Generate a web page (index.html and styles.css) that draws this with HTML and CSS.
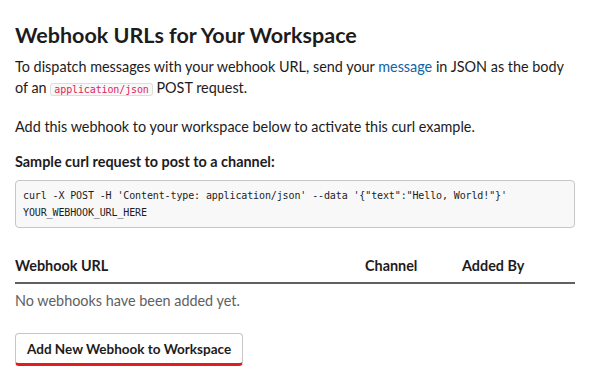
FILE: index.html
```html
<!DOCTYPE html>
<html>
<head>
    <title>Incoming Webhooks</title>
    <link rel="stylesheet" href="styles.css">
</head>
<body>
    <div class="page">
        <h1 class="title">Webhook URLs for Your Workspace</h1>
        <p class="intro">
            To dispatch messages with your webhook URL, send your <a href="#" class="link">message</a> in JSON as the body
            of an <code class="inline-code">application/json</code> POST request.
        </p>
        <p class="intro intro-note">Add this webhook to your workspace below to activate this curl example.</p>

        <div class="sample-label">Sample curl request to post to a channel:</div>
        <pre class="code-block">curl -X POST -H 'Content-type: application/json' --data '{"text":"Hello, World!"}'
YOUR_WEBHOOK_URL_HERE</pre>

        <div class="hooks-table">
            <div class="table-head">
                <span class="col-url">Webhook URL</span>
                <span class="col-channel">Channel</span>
                <span class="col-added">Added By</span>
            </div>
            <div class="empty-row">No webhooks have been added yet.</div>
        </div>

        <button class="add-button">Add New Webhook to Workspace</button>
    </div>
</body>
</html>
```

FILE: styles.css
```css
body {
    margin: 0;
    padding: 0;
    background: #ffffff;
    color: #1d1c1d;
    font-family: Lato, 'Noto Sans', sans-serif;
}

.page {
    padding: 21px 14px 0 15px;
}

.title {
    margin: 0 0 7px 0;
    font-size: 21.5px;
    font-weight: 700;
    line-height: 28px;
}

.intro {
    margin: 0 0 18px 0;
    font-size: 14.4px;
    line-height: 21px;
}

.intro-note {
    margin-bottom: 14px;
}

.link {
    color: #1264a3;
    text-decoration: none;
}

.inline-code {
    font-family: 'DejaVu Sans Mono', monospace;
    font-size: 10px;
    line-height: 12px;
    letter-spacing: -0.12px;
    color: #e01e5a;
    background-color: #f8f8f8;
    border: 1px solid #dddddd;
    border-radius: 3px;
    padding: 0 3px;
}

.sample-label {
    font-size: 14.4px;
    font-weight: 700;
    line-height: 21px;
    margin-bottom: 8px;
}

.code-block {
    margin: 0;
    padding: 6px 7px;
    background-color: #f8f8f8;
    border: 1px solid #c6c6c6;
    border-radius: 4px;
    font-family: 'DejaVu Sans Mono', monospace;
    font-size: 10px;
    letter-spacing: -0.12px;
    line-height: 17px;
    color: #1d1c1d;
}

.hooks-table {
    margin-top: 27px;
}

.table-head {
    display: flex;
    font-size: 14.4px;
    font-weight: 700;
    line-height: 21px;
    padding-bottom: 6px;
    border-bottom: 2px solid #616061;
}

.col-url {
    width: 350px;
}

.col-channel {
    width: 97px;
}

.empty-row {
    padding-top: 6px;
    font-size: 14.4px;
    line-height: 21px;
    color: #616061;
}

.add-button {
    margin-top: 22px;
    height: 33px;
    padding: 0 11px;
    font-family: Lato, 'Noto Sans', sans-serif;
    font-size: 13.5px;
    font-weight: 700;
    color: #1d1c1d;
    background-color: #ffffff;
    border: 1px solid #c6c6c6;
    border-bottom: 3px solid #e01e1e;
    border-radius: 4px;
}
```
